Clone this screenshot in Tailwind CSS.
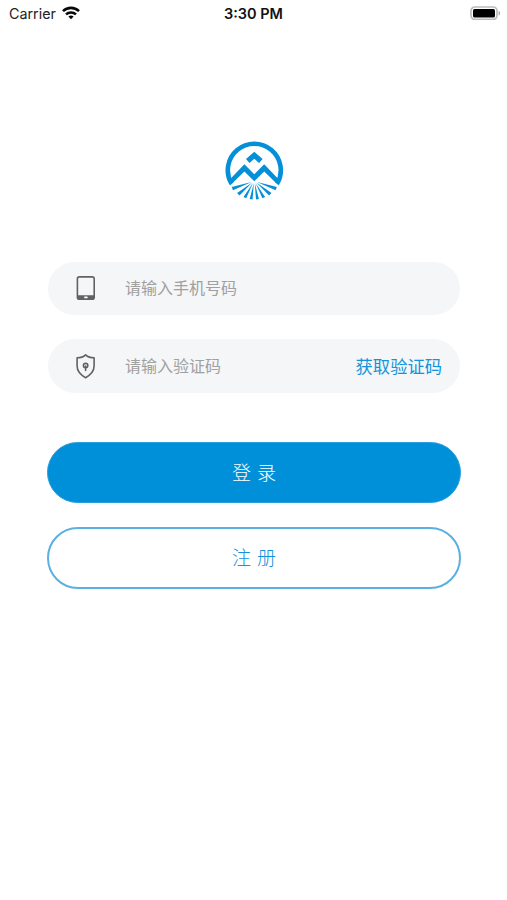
<!DOCTYPE html>
<html lang="zh-CN">
<head>
<meta charset="utf-8">
<meta name="viewport" content="width=device-width, initial-scale=1">
<title>登录</title>
<script src="https://cdn.jsdelivr.net/npm/@tailwindcss/browser@4"></script>
</head>
<body class="bg-white">
<div class="flex h-[900px] w-[507px] flex-col overflow-hidden bg-white font-['Inter','Noto_Sans_CJK_SC',sans-serif]">
  <header class="grid h-[27px] grid-cols-3 items-center pl-[9px] pr-[7px] text-[14.5px] leading-[27px] text-[#222]">
    <div class="flex items-center gap-[6px]">
      <span class="text-[14.3px]">Carrier</span>
      <svg class="-mt-px h-[14px] w-[18px]" viewBox="0 0 18 14" fill="none" stroke="#080808" stroke-width="2.6">
        <path d="M1 5.1C5.5.8 12.5.8 17 5.1"/>
        <path d="M4 8.4C6.8 5.8 11.2 5.8 14 8.4"/>
        <path d="M9 13.2 6.4 10.5Q9 8.5 11.6 10.5Z" fill="#080808" stroke="none"/>
      </svg>
    </div>
    <span class="pr-[2px] text-center text-[14.5px] font-semibold whitespace-nowrap text-[#111]">3:30 PM</span>
    <svg class="-mt-[2px] h-[14px] w-[30px] justify-self-end" viewBox="0 0 30 14">
      <rect x="1" y="1" width="26" height="12.4" rx="3.8" fill="#fff" stroke="#bcbcbc" stroke-width="1.7"/>
      <rect x="3" y="3" width="22" height="8.6" rx="1.6" fill="#000"/>
      <path d="M28.6 5Q30.4 5.7 30.4 7.2T28.6 9.4Z" fill="#aaa"/>
    </svg>
  </header>

  <main class="flex flex-col pl-[47px] pr-[46px] pt-[103px]">
    <svg class="size-20 self-center" viewBox="0 0 80 80" fill="none" stroke="#058fd9">
      <path d="M17.5 53.7A26.5 26.5 0 1 1 63.1 53.7" stroke-width="4.6"/>
      <path d="M16 55.6 14.8 50.4 30.4 34.2 40.3 44.3 50.2 34.2 65.8 50.4 64.6 55.6 50.2 41.6 40.3 51.2 30.4 41.6Z" fill="#058fd9" stroke="none"/>
      <path d="M40.3 21.8 48.6 29 45.1 33 40.3 28.7 35.5 33 32 29Z" fill="#058fd9" stroke="none"/>
      <g fill="#058fd9" stroke="none">
        <path d="M37.5 52 17.7 57.1 19 60.2Z"/>
        <path d="M38.2 52.6 23.1 63.1 25.5 65.4Z"/>
        <path d="M39 53.1 29.5 67 32.2 68.3Z"/>
        <path d="M39.8 53.3 35.7 69.1 38.6 69.5Z"/>
        <path d="M40.8 53.3 42 69.5 44.9 69.1Z"/>
        <path d="M41.6 53.1 48.4 68.3 51.1 67Z"/>
        <path d="M42.4 52.6 55.1 65.4 57.5 63.1Z"/>
        <path d="M43.1 52 61.6 60.2 62.9 57.1Z"/>
      </g>
    </svg>

    <form class="mt-[52px] flex flex-col">
      <label class="mx-px flex h-[53px] items-center rounded-full bg-[#f4f6f8] pl-[27px] pr-[18px]">
        <svg class="-mt-px h-[26px] w-[22px]" viewBox="0 0 22 26">
          <rect x="2.4" y="1.9" width="16.8" height="22.4" rx="2" fill="none" stroke="#626264" stroke-width="1.6"/>
          <path d="M2 20.2H19.6V22.7Q19.6 24.6 17.7 24.6H4Q2 24.6 2 22.7Z" fill="#626264"/>
          <rect x="9.2" y="21.6" width="3.4" height="1.6" rx=".5" fill="#fff"/>
        </svg>
        <span class="-mt-[2px] ml-[28px] text-[16px] text-[#a0a0a0]">请输入手机号码</span>
      </label>

      <label class="mx-px mt-[24px] flex h-[54px] items-center rounded-full bg-[#f4f6f8] pl-[27px] pr-[18px]">
        <svg class="h-[26px] w-[22px]" viewBox="0 0 22 26" fill="none" stroke="#626264" stroke-width="1.6" stroke-linejoin="round" stroke-linecap="round">
          <path d="M10.6 1.8Q13.8 4.8 19.1 4.8V13C19.1 18.5 15.3 22 10.6 24.7C5.9 22 2.1 18.5 2.1 13V4.8Q7.4 4.8 10.6 1.8Z"/>
          <circle cx="10.6" cy="12.6" r="2.2"/>
          <path d="M10.6 13V17.5"/>
        </svg>
        <span class="ml-[28px] text-[16px] text-[#a0a0a0]">请输入验证码</span>
        <button type="button" class="ml-auto pt-[2px] text-[17.3px] text-[#1593da]">获取验证码</button>
      </label>

      <button type="button" class="mt-[49px] h-[61px] rounded-full border border-[#2b9fdd] bg-[#008fd9] pt-[3px] text-[19px] font-light text-white"><span class="inline-flex gap-[6px]"><span>登</span><span>录</span></span></button>
      <button type="button" class="mt-[24px] h-[62px] rounded-full border-2 border-[#5ab0e1] bg-white pt-[3px] text-[19px] font-light text-[#1593da]"><span class="inline-flex gap-[6px]"><span>注</span><span>册</span></span></button>
    </form>
  </main>
</div>
</body>
</html>
